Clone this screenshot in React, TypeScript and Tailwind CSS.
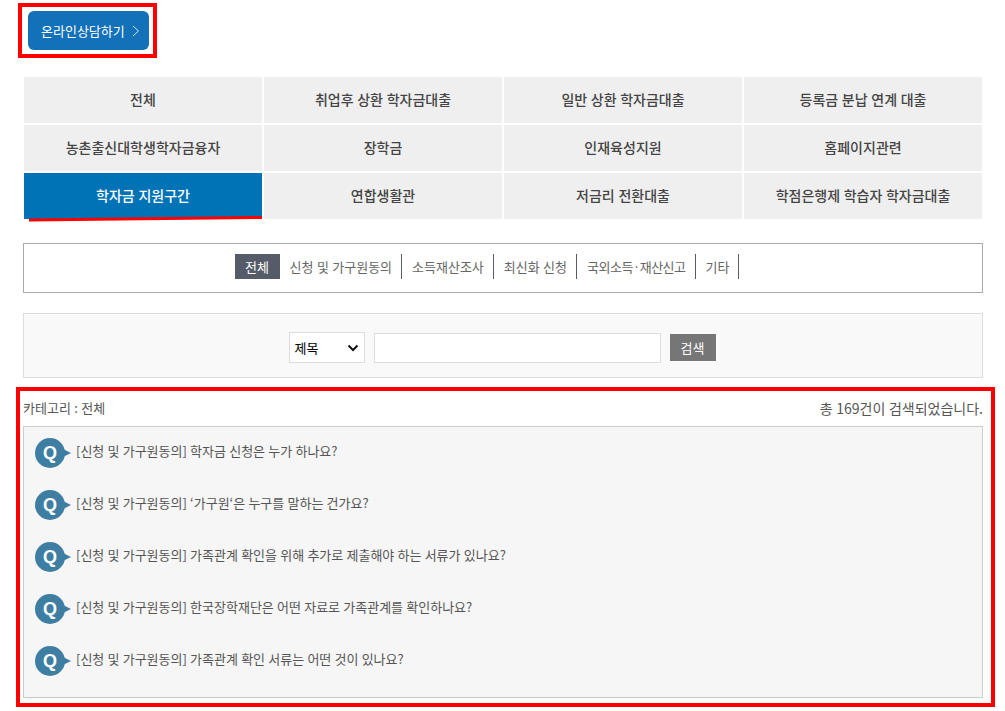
const font = "font-['Noto_Sans_CJK_KR','Liberation_Sans',sans-serif]";

const categories = [
  "전체",
  "취업후 상환 학자금대출",
  "일반 상환 학자금대출",
  "등록금 분납 연계 대출",
  "농촌출신대학생학자금융자",
  "장학금",
  "인재육성지원",
  "홈페이지관련",
  "학자금 지원구간",
  "연합생활관",
  "저금리 전환대출",
  "학점은행제 학습자 학자금대출",
];

const tabs = ["신청 및 가구원동의", "소득재산조사", "최신화 신청", "국외소득·재산신고", "기타"];

const questions = [
  "학자금 신청은 누가 하나요?",
  "‘가구원‘은 누구를 말하는 건가요?",
  "가족관계 확인을 위해 추가로 제출해야 하는 서류가 있나요?",
  "한국장학재단은 어떤 자료로 가족관계를 확인하나요?",
  "가족관계 확인 서류는 어떤 것이 있나요?",
];

function QBadge() {
  return (
    <svg width="36" height="30" viewBox="0 0 36 30" className="shrink-0">
      <circle cx="15" cy="15" r="15" fill="#3f7ea3" />
      <polygon points="28,11 36,15 28,19" fill="#3f7ea3" />
      <text x="15" y="21" textAnchor="middle" fill="#fff" fontSize="18" fontWeight="700" fontFamily="Liberation Sans">
        Q
      </text>
    </svg>
  );
}

export default function App() {
  return (
    <div className={`${font} relative w-[1005px] h-[711px] overflow-hidden bg-white text-[#444] [word-spacing:0.5px]`}>
      <div className="ml-[18px] mt-[3px] w-[139px] h-[55px] border-4 border-[#ff0000] pl-[6px] pt-[4px]">
        <button className="flex items-center w-[121px] h-[39px] rounded-[6px] bg-[#1271b8] pl-[13px] text-[13px] text-white">
          온라인상담하기
          <svg width="8" height="12" viewBox="0 0 8 12" className="ml-[7px]" fill="none" stroke="#dce9f4" strokeWidth="1">
            <path d="M1 1l5.5 5L1 11" />
          </svg>
        </button>
      </div>

      <div className="relative mt-[19px] mx-[24px] grid grid-cols-4 gap-[2px] w-[958px]">
        {categories.map((c, i) => (
          <div
            key={c}
            className={`h-[46px] pb-[2px] flex items-center justify-center text-[14px] font-medium ${
              i === 8 ? "bg-[#0073b7] text-white font-bold" : "bg-[#efefef] text-[#444]"
            }`}
          >
            {c}
          </div>
        ))}
        <svg width="240" height="6" viewBox="0 0 240 6" className="absolute left-[4px] top-[139px]">
          <path d="M1 4L234 1.5" stroke="#ff0000" strokeWidth="3" fill="none" />
        </svg>
      </div>

      <div className="mx-[23px] mt-[24px] h-[50px] w-[960px] border border-[#aaa] pb-[3px] pr-[32px] flex items-center justify-center text-[13px] text-[#666]">
        <span className="h-[25px] w-[45px] bg-[#555b68] text-white flex items-center justify-center">전체</span>
        {tabs.map((t) => (
          <span
            key={t}
            className={`h-[25px] flex items-center pl-[10px] pr-[9px] border-r border-[#555b68] ${
              t === "국외소득·재산신고" ? "tracking-[-0.5px]" : ""
            }`}
          >
            {t}
          </span>
        ))}
      </div>

      <div className="mx-[23px] mt-[20px] h-[65px] w-[960px] border border-[#ddd] bg-[#f9f9f9] pt-[4px] pr-[2px] flex items-center justify-center">
        <div className="h-[31px] w-[76px] border border-[#ddd] bg-white flex items-center justify-between px-[5px] text-[13px] text-black">
          제목
          <svg width="12" height="8" viewBox="0 0 12 8" fill="none" stroke="#111" strokeWidth="2">
            <path d="M1.5 1.5L6 6l4.5-4.5" />
          </svg>
        </div>
        <div className="ml-[9px] h-[30px] w-[287px] border border-[#ddd] bg-white" />
        <button className="ml-[9px] h-[27px] w-[46px] bg-[#767676] text-white text-[13px]">검색</button>
      </div>

      <div className="ml-[16px] mt-[9px] w-[979px] h-[320px] border-[4px] border-[#ff0000] pl-[3px] pr-[8px] pt-[7px]">
        <div className="flex justify-between items-center h-[20px] text-[#555]">
          <span className="text-[13px]">카테고리 : 전체</span>
          <span className="text-[14px]">총 169건이 검색되었습니다.</span>
        </div>
        <div className="mt-[8px] h-[272px] border border-[#ccc] bg-[#f6f6f6] pl-[11px] pt-[11px] flex flex-col gap-[22px]">
          {questions.map((q) => (
            <div key={q} className="flex items-center h-[30px] text-[13px] text-[#555] [word-spacing:0.3px]">
              <QBadge />
              <span className="ml-[5px] pb-[4px]">[신청 및 가구원동의] {q}</span>
            </div>
          ))}
        </div>
      </div>
    </div>
  );
}
